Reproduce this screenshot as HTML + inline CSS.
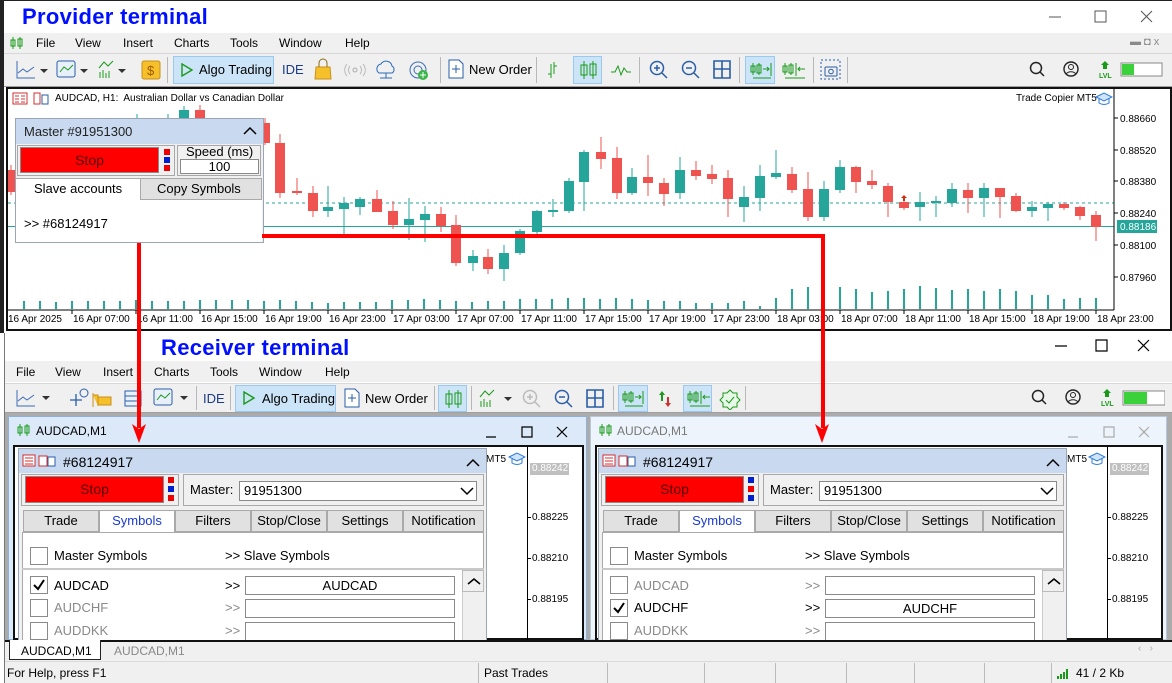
<!DOCTYPE html>
<html><head><meta charset="utf-8"><style>
*{box-sizing:border-box;margin:0;padding:0}
body{width:1172px;height:683px;position:relative;overflow:hidden;background:#fff;font-family:"Liberation Sans",sans-serif;font-size:12px;color:#000}
.a{position:absolute}
.t{position:absolute;white-space:nowrap}
.big{font-weight:bold;color:#0010ff;font-size:22px;letter-spacing:0.3px}
.menu{background:#f0f0f0}
.tb{background:#f0f0f0;border-top:1px solid #d8d8d8;border-bottom:1px solid #a0a0a0}
.hl{position:absolute;background:#cce4f7;border:1px solid #99c9ef}
.sep{position:absolute;width:1px;background:#b8b8b8}
.ax{font-size:10px;color:#000}
.panel{position:absolute;background:#f0f0f0;border:1px solid #9aa6b5}
.ph{position:absolute;background:#c9daf0}
.stop{position:absolute;background:#ff0000;border:1px solid #8a8a8a;color:#500;font-size:14px;text-align:center}
.sq{position:absolute;width:6px;height:6px}
.tab{position:absolute;top:0;height:22px;border:1px solid #a9a9a9;background:#e1e1e1;text-align:center;line-height:20px;font-size:13px}
.cb{position:absolute;width:18px;height:18px;border:1px solid #8a8a8a;background:#fff}
.inp{position:absolute;height:19px;border:1px solid #8a8a8a;background:#fff;text-align:center;font-size:13px;line-height:17px}
.f13{font-size:13px}
.gray{color:#8a8a8a}
</style></head><body>

<!-- ================= PROVIDER ================= -->
<div class="a" style="left:0;top:0;width:1172px;height:333px;border-left:4px solid #222;border-top:1px solid #222"></div>
<div class="t big" style="left:22px;top:4px">Provider terminal</div>
<svg class="a" style="left:1045px;top:8px" width="120" height="20"><path d="M4 9h12M50 3h11v11h-11zM96 3l11 11M107 3l-11 11" stroke="#555" fill="none"/></svg>
<div class="a menu" style="left:4px;top:33px;width:1168px;height:20px"></div>
<svg class="a" style="left:10px;top:36px" width="14" height="14"><path d="M3 1v12M1 4h4v6H1zM10 1v12M8 3h4v7H8z" stroke="#1a9a1a" fill="none"/></svg>
<div class="t" style="left:36px;top:36px">File</div><div class="t" style="left:75px;top:36px">View</div><div class="t" style="left:123px;top:36px">Insert</div><div class="t" style="left:174px;top:36px">Charts</div><div class="t" style="left:230px;top:36px">Tools</div><div class="t" style="left:279px;top:36px">Window</div><div class="t" style="left:345px;top:36px">Help</div>
<div class="t gray" style="left:1130px;top:36px;font-size:11px">▬ ◘ x</div>
<div class="a tb" style="left:4px;top:53px;width:1168px;height:34px"></div>
<svg class="a" style="left:14px;top:58px" width="150" height="24">
<path d="M3 3v17h18M4 15l5-4 4 3 7-5" stroke="#3a6db5" fill="none"/><path d="M26 11l4 4 4-4z" fill="#333"/>
<rect x="43" y="3" width="18" height="16" rx="2" stroke="#2a5ea8" fill="#e8f0fb"/><path d="M46 14l4-5 4 3 5-5" stroke="#1a9a1a" fill="none"/><path d="M66 11l4 4 4-4z" fill="#333"/>
<path d="M86 20v-6M89 20v-8M92 20v-5M95 20v-7M85 10l5-6 4 4 5-5" stroke="#1a9a1a" fill="none"/><path d="M104 11l4 4 4-4z" fill="#333"/>
<rect x="128" y="3" width="18" height="18" rx="2" fill="#f5c02a" stroke="#c8901a"/><text x="133" y="17" font-size="13" fill="#a05a00" font-family="Liberation Sans">$</text></svg>
<div class="sep" style="left:167px;top:57px;height:26px"></div>
<div class="hl" style="left:173px;top:56px;width:101px;height:28px"></div>
<svg class="a" style="left:180px;top:62px" width="14" height="16"><path d="M2 2l10 6-10 6z" stroke="#1a9a1a" fill="none" stroke-width="1.4"/></svg>
<div class="t f13" style="left:199px;top:62px">Algo Trading</div>
<div class="t f13" style="left:282px;top:62px;color:#1a3a8a">IDE</div>
<svg class="a" style="left:312px;top:58px" width="130" height="24"><path d="M4 9h14l1 12H3z" fill="#f5c02a" stroke="#c8901a"/><path d="M7 9V5a4 4 0 018 0v4" stroke="#8a6a10" fill="none"/>
<circle cx="43" cy="12" r="2" stroke="#aaa" fill="none"/><path d="M38 8a6 6 0 000 8M48 8a6 6 0 010 8M35 6a9 9 0 000 12M51 6a9 9 0 010 12" stroke="#bbb" fill="none"/>
<path d="M67 15a5 5 0 012-9 6 6 0 0111 2 4 4 0 010 7zM74 15v5M68 20h12" stroke="#2a6ab8" fill="none"/>
<circle cx="106" cy="12" r="8" stroke="#3a6db5" fill="none"/><circle cx="106" cy="12" r="4" stroke="#3a6db5" fill="none"/><circle cx="111" cy="17" r="5" fill="#3ab54a"/><path d="M108 17h6M111 14v6" stroke="#fff"/></svg>
<div class="sep" style="left:440px;top:57px;height:26px"></div>
<svg class="a" style="left:448px;top:59px" width="16" height="20"><path d="M1 1h10l4 4v14H1z" stroke="#2a5ea8" fill="#fff"/><path d="M8 6v8M4 10h8" stroke="#2a5ea8"/></svg>
<div class="t f13" style="left:469px;top:62px">New Order</div>
<div class="sep" style="left:536px;top:57px;height:26px"></div>
<svg class="a" style="left:545px;top:60px" width="22" height="20"><path d="M6 4v14M3 14h3M9 2v12M9 6h3" stroke="#1a9a1a" fill="none"/></svg>
<div class="hl" style="left:573px;top:56px;width:29px;height:28px"></div>
<svg class="a" style="left:579px;top:60px" width="20" height="20"><path d="M5 1v18M2 5h6v10H2zM14 1v18M11 4h6v11h-6z" stroke="#1a9a1a" fill="none"/></svg>
<svg class="a" style="left:610px;top:60px" width="22" height="20"><path d="M1 12l4 0 3-6 3 9 3-7 3 4h4" stroke="#1a9a1a" fill="none"/></svg>
<div class="sep" style="left:639px;top:57px;height:26px"></div>
<svg class="a" style="left:648px;top:58px" width="100" height="24"><circle cx="9" cy="10" r="6.5" stroke="#2a5ea8" fill="none" stroke-width="1.5"/><path d="M14 15l5 5M6 10h6M9 7v6" stroke="#2a5ea8" stroke-width="1.5"/>
<circle cx="41" cy="10" r="6.5" stroke="#2a5ea8" fill="none" stroke-width="1.5"/><path d="M46 15l5 5M38 10h6" stroke="#2a5ea8" stroke-width="1.5"/>
<path d="M66 3h16v17H66zM74 3v17M66 11h16" stroke="#2a5ea8" stroke-width="1.6" fill="none"/></svg>
<div class="sep" style="left:739px;top:57px;height:26px"></div>
<div class="hl" style="left:745px;top:56px;width:30px;height:28px"></div>
<svg class="a" style="left:750px;top:60px" width="60" height="20"><path d="M3 3v12M1 6h4v6H1zM9 3v12M7 5h4v8H7zM13 9h6M17 7l2 2-2 2M21 3v13M3 18h18" stroke="#1a9a1a" fill="none"/>
<path d="M35 3v12M33 6h4v6h-4zM41 3v12M39 5h4v8h-4zM46 3v13M48 9h7M50 7l-2 2 2 2M35 18h20" stroke="#1a9a1a" fill="none"/></svg>
<div class="sep" style="left:813px;top:57px;height:26px"></div>
<svg class="a" style="left:820px;top:59px" width="22" height="22"><rect x="1" y="1" width="19" height="19" stroke="#2a5ea8" stroke-dasharray="2 2" fill="none"/><rect x="5" y="8" width="12" height="9" rx="1" stroke="#2a5ea8" fill="none"/><circle cx="11" cy="12.5" r="2.3" stroke="#2a5ea8" fill="none"/></svg>
<div class="sep" style="left:847px;top:57px;height:26px"></div>
<svg class="a" style="left:1028px;top:60px" width="135" height="20"><circle cx="8" cy="8" r="5.5" stroke="#222" fill="none" stroke-width="1.5"/><path d="M12 12l4 4" stroke="#222" stroke-width="1.5"/>
<circle cx="43" cy="9" r="7" stroke="#222" fill="none" stroke-width="1.4"/><circle cx="43" cy="7" r="2.5" stroke="#222" fill="none"/><path d="M38 14a6 5 0 0110 0" stroke="#222" fill="none"/>
<path d="M77 1l-4 4h2v4h4V5h2z" fill="#1a9a1a"/><text x="71" y="18" font-size="7" fill="#1a9a1a" font-family="Liberation Sans" font-weight="bold">LVL</text>
<rect x="93" y="3" width="41" height="13" fill="#fff" stroke="#888"/><rect x="94" y="4" width="12" height="11" fill="#3ad13a"/></svg>

<!-- chart -->
<div class="a" style="left:6px;top:87px;width:1166px;height:244px;border:2px solid #111;background:#fff"></div>
<svg class="a" style="left:0;top:0" width="1172" height="332">
<path d="M8 203H1114" stroke="#26a69a" stroke-dasharray="3 3"/>
<path d="M8 226.5H1114" stroke="#26a69a"/>
<path d="M1114 89V310M8 310H1114" stroke="#000"/>
<g stroke="#26a69a" stroke-width="1">
<path d="M137 114v4M168 114v4M184 106v13M328 186v31M344 197v37M360 197v18M409 198v42M425 206v36M473 250v21M504 245v36M520 229v26M537 210v24M553 199v18M569 178v35M584 150v61M632 168v27M680 157v42M744 186v36M760 165v46M776 150v29M824 181v40M840 160v33M920 192v29M936 196v21M952 183v24M984 183v34M1032 201v16M1048 202v19"/>
</g>
<g fill="#26a69a">
<rect x="179" y="110" width="10" height="9"/><rect x="323" y="207" width="10" height="4"/><rect x="339" y="203" width="10" height="6"/><rect x="355" y="199" width="10" height="8"/><rect x="404" y="219" width="10" height="6"/><rect x="420" y="214" width="10" height="6"/><rect x="468" y="256" width="10" height="7"/><rect x="499" y="253" width="10" height="16"/><rect x="515" y="231" width="10" height="22"/><rect x="532" y="211" width="10" height="21"/><rect x="548" y="210" width="10" height="2"/><rect x="564" y="181" width="10" height="30"/><rect x="579" y="152" width="10" height="30"/><rect x="627" y="177" width="10" height="16"/><rect x="675" y="170" width="10" height="23"/><rect x="739" y="197" width="10" height="10"/><rect x="755" y="176" width="10" height="22"/><rect x="771" y="173" width="10" height="4"/><rect x="819" y="189" width="10" height="28"/><rect x="835" y="167" width="10" height="23"/><rect x="915" y="202" width="10" height="5"/><rect x="931" y="201" width="10" height="2"/><rect x="947" y="189" width="10" height="14"/><rect x="979" y="188" width="10" height="10"/><rect x="1027" y="207" width="10" height="4"/><rect x="1043" y="204" width="10" height="4"/>
</g>
<g stroke="#ef5350">
<path d="M11 165v30M200 105v20M265 118v27M280 134v64M297 178v17M313 186v31M377 190v22M393 201v28M441 207v25M456 215v51M488 249v25M601 137v32M617 147v52M648 155v41M664 178v28M696 161v19M712 165v19M728 170v47M792 167v26M808 172v49M856 166v27M872 170v19M888 183v34M904 196v14M968 183v30M1000 188v30M1016 193v19M1064 202v8M1080 206v14M1096 211v30"/>
</g>
<g fill="#ef5350">
<rect x="8" y="170" width="8" height="22"/><rect x="195" y="110" width="10" height="15"/><rect x="260" y="123" width="10" height="20"/><rect x="275" y="143" width="10" height="50"/><rect x="292" y="191" width="10" height="2"/><rect x="308" y="193" width="10" height="18"/><rect x="372" y="199" width="10" height="13"/><rect x="388" y="211" width="10" height="14"/><rect x="436" y="214" width="10" height="12"/><rect x="451" y="225" width="10" height="38"/><rect x="483" y="257" width="10" height="12"/><rect x="596" y="152" width="10" height="7"/><rect x="612" y="158" width="10" height="35"/><rect x="643" y="177" width="10" height="6"/><rect x="659" y="183" width="10" height="11"/><rect x="691" y="170" width="10" height="6"/><rect x="707" y="174" width="10" height="5"/><rect x="723" y="178" width="10" height="21"/><rect x="787" y="174" width="10" height="16"/><rect x="803" y="189" width="10" height="28"/><rect x="851" y="167" width="10" height="15"/><rect x="867" y="181" width="10" height="4"/><rect x="883" y="186" width="10" height="16"/><rect x="899" y="202" width="10" height="6"/><rect x="963" y="190" width="10" height="8"/><rect x="995" y="188" width="10" height="9"/><rect x="1011" y="196" width="10" height="15"/><rect x="1059" y="204" width="10" height="4"/><rect x="1075" y="207" width="10" height="9"/><rect x="1091" y="215" width="10" height="12"/>
</g>
<path d="M904 195l-3 3h2v3h2v-3h2z" fill="#d03010"/>
<g stroke="#26a69a" stroke-width="2">
<path d="M24 309v-8M40 309v-8M56 309v-7M72 309v-8M88 309v-8M104 309v-8M120 309v-8M136 309v-9M152 309v-8M168 309v-8M184 309v-8M200 309v-9M216 309v-9M232 309v-9M248 309v-9M264 309v-8M280 309v-9M296 309v-8M312 309v-7M328 309v-6M344 309v-7M360 309v-7M376 309v-7M392 309v-9M408 309v-9M424 309v-10M440 309v-9M456 309v-8M472 309v-7M488 309v-8M504 309v-8M520 309v-10M536 309v-10M552 309v-10M568 309v-11M584 309v-11M600 309v-10M616 309v-11M632 309v-10M648 309v-9M664 309v-8M680 309v-8M696 309v-6M712 309v-6M728 309v-6M744 309v-8M760 309v-3M776 309v-11M792 309v-20M808 309v-22M824 309v-21M840 309v-22M856 309v-20M872 309v-17M888 309v-18M904 309v-20M920 309v-23M936 309v-21M952 309v-19M968 309v-20M984 309v-18M1000 309v-20M1016 309v-18M1032 309v-14M1048 309v-14M1064 309v-10M1080 309v-11M1096 309v-11"/>
</g>
<g stroke="#000"><path d="M72 310v4M136 310v4M200 310v4M264 310v4M328 310v4M392 310v4M456 310v4M520 310v4M584 310v4M648 310v4M712 310v4M776 310v4M840 310v4M904 310v4M968 310v4M1032 310v4M1096 310v4M1114 118h4M1114 150h4M1114 181h4M1114 213h4M1114 245h4M1114 277h4"/></g>
<g font-family="Liberation Sans" font-size="10" fill="#000">
<text x="8" y="322">16 Apr 2025</text><text x="73" y="322">16 Apr 07:00</text><text x="137" y="322">16 Apr 11:00</text><text x="201" y="322">16 Apr 15:00</text><text x="265" y="322">16 Apr 19:00</text><text x="329" y="322">16 Apr 23:00</text><text x="393" y="322">17 Apr 03:00</text><text x="457" y="322">17 Apr 07:00</text><text x="521" y="322">17 Apr 11:00</text><text x="585" y="322">17 Apr 15:00</text><text x="649" y="322">17 Apr 19:00</text><text x="713" y="322">17 Apr 23:00</text><text x="777" y="322">18 Apr 03:00</text><text x="841" y="322">18 Apr 07:00</text><text x="905" y="322">18 Apr 11:00</text><text x="969" y="322">18 Apr 15:00</text><text x="1033" y="322">18 Apr 19:00</text><text x="1097" y="322">18 Apr 23:00</text>
<text x="1120" y="122">0.88660</text><text x="1120" y="154">0.88520</text><text x="1120" y="185">0.88380</text><text x="1120" y="217">0.88240</text><text x="1120" y="249">0.88100</text><text x="1120" y="281">0.87960</text>
</g>
<rect x="1117" y="220" width="40" height="13" fill="#26a69a"/><text x="1120" y="230" font-family="Liberation Sans" font-size="10" fill="#fff">0.88186</text>
</svg>
<svg class="a" style="left:12px;top:92px" width="40" height="14"><rect x="1" y="1" width="14" height="11" stroke="#d03030" fill="#fff"/><path d="M3 4h4M3 7h4M3 10h4M9 4h4M9 7h4M9 10h4" stroke="#d03030"/><rect x="22" y="1" width="6" height="11" stroke="#d03030" fill="#fff"/><rect x="30" y="3" width="6" height="9" stroke="#2a5ea8" fill="#fff"/></svg>
<div class="t" style="left:55px;top:93px;font-size:10px">AUDCAD, H1:&nbsp; Australian Dollar vs Canadian Dollar</div>
<div class="t" style="left:1016px;top:93px;font-size:10px">Trade Copier MT5</div>
<svg class="a" style="left:1095px;top:92px" width="18" height="14"><path d="M1 5l8-4 8 4-8 4z" stroke="#2a7ad8" fill="#cfe4fa"/><path d="M4 7v4c3 2 7 2 10 0V7" stroke="#2a7ad8" fill="none"/></svg>

<!-- provider panel -->
<div class="panel" style="left:15px;top:118px;width:249px;height:125px"></div>
<div class="ph" style="left:16px;top:119px;width:247px;height:25px"></div>
<div class="t f13" style="left:24px;top:124px;color:#222">Master #91951300</div>
<svg class="a" style="left:243px;top:126px" width="14" height="10"><path d="M1 8l6-6 6 6" stroke="#000" fill="none" stroke-width="1.5"/></svg>
<div class="a" style="left:17px;top:145px;width:158px;height:31px;border:1px solid #a8a8a8"></div>
<div class="stop" style="left:20px;top:147px;width:139px;height:26px;line-height:24px">Stop</div>
<div class="sq" style="left:164px;top:149px;background:#e00"></div><div class="sq" style="left:164px;top:157px;background:#0020d0"></div><div class="sq" style="left:164px;top:165px;background:#e00"></div>
<div class="a" style="left:177px;top:145px;width:84px;height:31px;border:1px solid #a8a8a8"></div>
<div class="t" style="left:186px;top:144px;font-size:13px">Speed (ms)</div>
<div class="inp" style="left:180px;top:159px;width:79px;height:15px;line-height:13px">100</div>
<div class="a" style="left:16px;top:178px;width:246px;height:64px;background:#fff;border-top:1px solid #a9a9a9"></div>
<div class="a" style="left:140px;top:178px;width:122px;height:22px;background:#e1e1e1;border:1px solid #a9a9a9"></div>
<div class="t f13" style="left:34px;top:181px">Slave accounts</div>
<div class="t f13" style="left:157px;top:181px">Copy Symbols</div>
<div class="t f13" style="left:24px;top:216px">&gt;&gt; #68124917</div>

<!-- ================= RECEIVER ================= -->
<div class="a" style="left:4px;top:333px;width:1168px;height:350px;background:#fff;border-left:1px solid #777"></div>
<div class="t big" style="left:161px;top:335px">Receiver terminal</div>
<svg class="a" style="left:1050px;top:338px" width="120" height="18"><path d="M5 8h12M46 2h11v11H46zM88 2l11 11M99 2l-11 11" stroke="#000" fill="none" stroke-width="1.2"/></svg>
<div class="a menu" style="left:5px;top:361px;width:1167px;height:21px"></div>
<div class="t" style="left:16px;top:365px">File</div><div class="t" style="left:55px;top:365px">View</div><div class="t" style="left:103px;top:365px">Insert</div><div class="t" style="left:154px;top:365px">Charts</div><div class="t" style="left:210px;top:365px">Tools</div><div class="t" style="left:259px;top:365px">Window</div><div class="t" style="left:325px;top:365px">Help</div>
<div class="a tb" style="left:5px;top:383px;width:1167px;height:30px"></div>
<svg class="a" style="left:14px;top:387px" width="180" height="22">
<path d="M3 3v16h18M4 14l5-4 4 3 7-5" stroke="#3a6db5" fill="none"/><path d="M28 9l4 4 4-4z" fill="#333"/>
<path d="M62 7v12M56 13h12" stroke="#2a5ea8" stroke-width="1.3"/><circle cx="70" cy="6" r="4" stroke="#2a5ea8" fill="none"/>
<path d="M79 6v14M79 8h5v11M84 10h13v8H84z" stroke="#c8901a" fill="#f5c02a"/>
<rect x="111" y="4" width="16" height="15" stroke="#2a5ea8" fill="#e8f0fb"/><path d="M111 9h16M111 14h16" stroke="#2a5ea8"/>
<rect x="140" y="2" width="18" height="16" rx="2" stroke="#2a5ea8" fill="#e8f0fb"/><path d="M143 13l4-5 4 3 5-5" stroke="#1a9a1a" fill="none"/><path d="M166 9l4 4 4-4z" fill="#333"/></svg>
<div class="sep" style="left:196px;top:386px;height:24px"></div>
<div class="t f13" style="left:203px;top:391px;color:#1a3a8a">IDE</div>
<div class="sep" style="left:230px;top:386px;height:24px"></div>
<div class="hl" style="left:235px;top:385px;width:101px;height:27px"></div>
<svg class="a" style="left:242px;top:390px" width="14" height="16"><path d="M2 2l10 6-10 6z" stroke="#1a9a1a" fill="none" stroke-width="1.4"/></svg>
<div class="t f13" style="left:262px;top:391px">Algo Trading</div>
<svg class="a" style="left:344px;top:388px" width="16" height="20"><path d="M1 1h10l4 4v14H1z" stroke="#2a5ea8" fill="#fff"/><path d="M8 6v8M4 10h8" stroke="#2a5ea8"/></svg>
<div class="t f13" style="left:365px;top:391px">New Order</div>
<div class="sep" style="left:434px;top:386px;height:24px"></div>
<div class="hl" style="left:438px;top:385px;width:29px;height:27px"></div>
<svg class="a" style="left:444px;top:389px" width="20" height="20"><path d="M5 1v18M2 5h6v10H2zM14 1v18M11 4h6v11h-6z" stroke="#1a9a1a" fill="none"/></svg>
<div class="sep" style="left:471px;top:386px;height:24px"></div>
<svg class="a" style="left:478px;top:388px" width="140" height="22"><path d="M3 19v-6M6 19v-8M9 19v-5M12 19v-7M2 9l5-6 4 4 5-5" stroke="#1a9a1a" fill="none"/><path d="M26 9l4 4 4-4z" fill="#333"/>
<circle cx="52" cy="9" r="6.5" stroke="#bbb" fill="none" stroke-width="1.5"/><path d="M57 14l5 5M49 9h6M52 6v6" stroke="#bbb" stroke-width="1.5"/>
<circle cx="84" cy="9" r="6.5" stroke="#2a5ea8" fill="none" stroke-width="1.5"/><path d="M89 14l5 5M81 9h6" stroke="#2a5ea8" stroke-width="1.5"/>
<path d="M109 2h16v17h-16zM117 2v17M109 10h16" stroke="#2a5ea8" stroke-width="1.6" fill="none"/></svg>
<div class="sep" style="left:613px;top:386px;height:24px"></div>
<div class="hl" style="left:618px;top:385px;width:30px;height:27px"></div>
<div class="hl" style="left:683px;top:385px;width:29px;height:27px"></div>
<svg class="a" style="left:622px;top:388px" width="125" height="22"><path d="M3 3v12M1 6h4v6H1zM9 3v12M7 5h4v8H7zM13 9h6M17 7l2 2-2 2M21 3v13M3 18h18" stroke="#1a9a1a" fill="none"/>
<path d="M40 3l-3 4h2v6h2V7h2z" fill="#1a9a1a"/><path d="M46 19l3-4h-2V9h-2v6h-2z" fill="#d03030"/>
<path d="M68 3v12M66 6h4v6h-4zM74 3v12M72 5h4v8h-4zM79 3v13M81 9h7M83 7l-2 2 2 2M68 18h20" stroke="#1a9a1a" fill="none"/>
<path d="M108 2l3 3h4v4l3 3-3 3v4h-4l-3 3-3-3h-4v-4l-3-3 3-3V5h4z" stroke="#1a9a1a" fill="#e8f8e8"/><path d="M104 12l3 3 5-6" stroke="#1a9a1a" fill="none"/></svg>
<div class="sep" style="left:745px;top:386px;height:24px"></div>
<svg class="a" style="left:1030px;top:388px" width="135" height="20"><circle cx="8" cy="8" r="5.5" stroke="#222" fill="none" stroke-width="1.5"/><path d="M12 12l4 4" stroke="#222" stroke-width="1.5"/>
<circle cx="43" cy="9" r="7" stroke="#222" fill="none" stroke-width="1.4"/><circle cx="43" cy="7" r="2.5" stroke="#222" fill="none"/><path d="M38 14a6 5 0 0110 0" stroke="#222" fill="none"/>
<path d="M77 1l-4 4h2v4h4V5h2z" fill="#1a9a1a"/><text x="71" y="18" font-size="7" fill="#1a9a1a" font-family="Liberation Sans" font-weight="bold">LVL</text>
<rect x="93" y="3" width="42" height="14" fill="#fff" stroke="#888"/><rect x="94" y="4" width="23" height="12" fill="#3ad13a"/></svg>

<!-- MDI area -->
<div class="a" style="left:5px;top:413px;width:1167px;height:227px;background:#ababab"></div>
<!-- left child -->
<div class="a" style="left:8px;top:416px;width:579px;height:224px;background:#dbe9f8;border:1px solid #8fb0d8"></div>
<svg class="a" style="left:17px;top:423px" width="14" height="14"><path d="M3 1v12M1 4h4v6H1zM10 1v12M8 3h4v7H8z" stroke="#1a9a1a" fill="none"/></svg>
<div class="t" style="left:36px;top:424px">AUDCAD,M1</div>
<svg class="a" style="left:480px;top:424px" width="95" height="16"><path d="M6 13h10M42 3h10v10H42zM77 3l10 10M87 3l-10 10" stroke="#000" fill="none" stroke-width="1.2"/></svg>
<div class="a" style="left:13px;top:445px;width:571px;height:195px;background:#fff;border:2px solid #111"></div>
<div class="a" style="left:527px;top:447px;width:1px;height:193px;background:#000"></div>
<div class="t" style="left:486px;top:454px;font-size:10px">MT5</div>
<svg class="a" style="left:508px;top:452px" width="18" height="14"><path d="M1 5l8-4 8 4-8 4z" stroke="#2a7ad8" fill="#cfe4fa"/><path d="M4 7v4c3 2 7 2 10 0V7" stroke="#2a7ad8" fill="none"/></svg>
<div class="a" style="left:530px;top:463px;width:39px;height:12px;background:#c0c0c0;color:#fff;font-size:10px;padding-left:2px">0.88242</div>
<div class="t ax" style="left:532px;top:512px">0.88225</div><div class="t ax" style="left:532px;top:553px">0.88210</div><div class="t ax" style="left:532px;top:594px">0.88195</div>
<div class="a" style="left:527px;top:517px;width:4px;height:1px;background:#000"></div><div class="a" style="left:527px;top:558px;width:4px;height:1px;background:#000"></div><div class="a" style="left:527px;top:599px;width:4px;height:1px;background:#000"></div>

<!-- right child -->
<div class="a" style="left:590px;top:416px;width:577px;height:224px;background:#eef4fb;border:1px solid #b8c8dc"></div>
<svg class="a" style="left:599px;top:423px" width="14" height="14"><path d="M3 1v12M1 4h4v6H1zM10 1v12M8 3h4v7H8z" stroke="#1a9a1a" fill="none"/></svg>
<div class="t" style="left:617px;top:424px;color:#777">AUDCAD,M1</div>
<svg class="a" style="left:1062px;top:424px" width="95" height="16"><path d="M6 13h10M42 3h10v10H42zM77 3l10 10M87 3l-10 10" stroke="#aaa" fill="none" stroke-width="1.2"/></svg>
<div class="a" style="left:595px;top:445px;width:568px;height:195px;background:#fff;border:2px solid #111"></div>
<div class="a" style="left:1107px;top:447px;width:1px;height:193px;background:#000"></div>
<div class="t" style="left:1067px;top:454px;font-size:10px">MT5</div>
<svg class="a" style="left:1088px;top:452px" width="18" height="14"><path d="M1 5l8-4 8 4-8 4z" stroke="#2a7ad8" fill="#cfe4fa"/><path d="M4 7v4c3 2 7 2 10 0V7" stroke="#2a7ad8" fill="none"/></svg>
<div class="a" style="left:1110px;top:463px;width:39px;height:12px;background:#c0c0c0;color:#fff;font-size:10px;padding-left:2px">0.88242</div>
<div class="t ax" style="left:1112px;top:512px">0.88225</div><div class="t ax" style="left:1112px;top:553px">0.88210</div><div class="t ax" style="left:1112px;top:594px">0.88195</div>
<div class="a" style="left:1107px;top:517px;width:4px;height:1px;background:#000"></div><div class="a" style="left:1107px;top:558px;width:4px;height:1px;background:#000"></div><div class="a" style="left:1107px;top:599px;width:4px;height:1px;background:#000"></div>

<!-- receiver panels -->
<div id="P1" class="a" style="left:18px;top:448px;width:469px;height:192px">
 <div class="panel" style="left:0;top:0;width:469px;height:200px"></div>
 <div class="ph" style="left:1px;top:1px;width:467px;height:24px"></div>
 <svg class="a" style="left:4px;top:6px" width="40" height="14"><rect x="1" y="1" width="12" height="11" stroke="#d03030" fill="#fff"/><path d="M3 4h8M3 7h8M3 10h8" stroke="#d03030"/><rect x="17" y="2" width="8" height="10" stroke="#d03030" fill="#fff"/><rect x="26" y="3" width="7" height="9" stroke="#2a5ea8" fill="#fff"/></svg>
 <div class="t" style="left:45px;top:6px;font-size:14px">#68124917</div>
 <svg class="a" style="left:448px;top:10px" width="14" height="10"><path d="M1 8l6-6 6 6" stroke="#000" fill="none" stroke-width="1.5"/></svg>
 <div class="a" style="left:3px;top:26px;width:158px;height:32px;border:1px solid #a8a8a8"></div>
 <div class="stop" style="left:7px;top:28px;width:139px;height:27px;line-height:25px">Stop</div>
 <div class="sq" style="left:150px;top:29px;background:#e00"></div><div class="sq" style="left:150px;top:38px;background:#0020d0"></div><div class="sq" style="left:150px;top:47px;background:#e00"></div>
 <div class="a" style="left:165px;top:26px;width:301px;height:32px;border:1px solid #a8a8a8"></div>
 <div class="t f13" style="left:172px;top:34px">Master:</div>
 <div class="a" style="left:221px;top:33px;width:238px;height:20px;border:1px solid #8a8a8a;background:#fff"></div>
 <div class="t f13" style="left:226px;top:35px">91951300</div>
 <svg class="a" style="left:442px;top:38px" width="14" height="10"><path d="M1 2l6 6 6-6" stroke="#000" fill="none" stroke-width="1.5"/></svg>
 <div class="a" style="left:4px;top:84px;width:462px;height:120px;background:#fff;border:1px solid #a9a9a9"></div>
 <div class="a" style="left:5px;top:62px;width:461px;height:23px">
  <div class="tab" style="left:0;width:76px">Trade</div>
  <div class="tab" style="left:76px;width:76px;background:#fff;border-bottom:none;color:#1a3ad0">Symbols</div>
  <div class="tab" style="left:152px;width:76px">Filters</div>
  <div class="tab" style="left:228px;width:76px">Stop/Close</div>
  <div class="tab" style="left:304px;width:76px">Settings</div>
  <div class="tab" style="left:380px;width:81px">Notification</div>
 </div>
 <div class="cb" style="left:12px;top:99px"></div>
 <div class="t f13" style="left:36px;top:100px">Master Symbols</div>
 <div class="t f13" style="left:207px;top:100px">&gt;&gt; Slave Symbols</div>
 <div class="a" style="left:4px;top:120px;width:462px;height:2px;background:#c8c8c8"></div>
 <div class="a" style="left:444px;top:122px;width:22px;height:80px;background:#f0f0f0;border-left:1px solid #ccc"></div>
 <div class="a" style="left:444px;top:122px;width:22px;height:22px;border:1px solid #bbb;background:#f0f0f0"></div>
 <svg class="a" style="left:449px;top:129px" width="14" height="10"><path d="M1 7l6-5 6 5" stroke="#000" fill="none" stroke-width="1.5"/></svg>
 <div class="cb" style="left:12px;top:128px"></div><div class="t f13 r1" style="left:36px;top:130px">AUDCAD</div><div class="t f13" style="left:207px;top:130px">&gt;&gt;</div><div class="inp" style="left:227px;top:128px;width:210px">AUDCAD</div>
 <div class="cb" style="left:12px;top:151px"></div><div class="t f13 gray" style="left:36px;top:152px">AUDCHF</div><div class="t f13 gray" style="left:207px;top:152px">&gt;&gt;</div><div class="inp" style="left:227px;top:151px;width:210px"></div>
 <div class="cb" style="left:12px;top:174px"></div><div class="t f13 gray" style="left:36px;top:175px">AUDDKK</div><div class="t f13 gray" style="left:207px;top:175px">&gt;&gt;</div><div class="inp" style="left:227px;top:174px;width:210px"></div>
 <svg class="a" style="left:14px;top:130px" width="14" height="14"><path d="M2 7l4 4 6-9" stroke="#000" fill="none" stroke-width="2"/></svg>
</div>

<div class="a" style="left:598px;top:448px;width:469px;height:192px;overflow:hidden">
 <div class="panel" style="left:0;top:0;width:469px;height:200px"></div>
 <div class="ph" style="left:1px;top:1px;width:467px;height:24px"></div>
 <svg class="a" style="left:4px;top:6px" width="40" height="14"><rect x="1" y="1" width="12" height="11" stroke="#d03030" fill="#fff"/><path d="M3 4h8M3 7h8M3 10h8" stroke="#d03030"/><rect x="17" y="2" width="8" height="10" stroke="#d03030" fill="#fff"/><rect x="26" y="3" width="7" height="9" stroke="#2a5ea8" fill="#fff"/></svg>
 <div class="t" style="left:45px;top:6px;font-size:14px">#68124917</div>
 <svg class="a" style="left:448px;top:10px" width="14" height="10"><path d="M1 8l6-6 6 6" stroke="#000" fill="none" stroke-width="1.5"/></svg>
 <div class="a" style="left:3px;top:26px;width:158px;height:32px;border:1px solid #a8a8a8"></div>
 <div class="stop" style="left:7px;top:28px;width:139px;height:27px;line-height:25px">Stop</div>
 <div class="sq" style="left:150px;top:29px;background:#0020d0"></div><div class="sq" style="left:150px;top:38px;background:#e00"></div><div class="sq" style="left:150px;top:47px;background:#0020d0"></div>
 <div class="a" style="left:165px;top:26px;width:301px;height:32px;border:1px solid #a8a8a8"></div>
 <div class="t f13" style="left:172px;top:34px">Master:</div>
 <div class="a" style="left:221px;top:33px;width:238px;height:20px;border:1px solid #8a8a8a;background:#fff"></div>
 <div class="t f13" style="left:226px;top:35px">91951300</div>
 <svg class="a" style="left:442px;top:38px" width="14" height="10"><path d="M1 2l6 6 6-6" stroke="#000" fill="none" stroke-width="1.5"/></svg>
 <div class="a" style="left:4px;top:84px;width:462px;height:120px;background:#fff;border:1px solid #a9a9a9"></div>
 <div class="a" style="left:5px;top:62px;width:461px;height:23px">
  <div class="tab" style="left:0;width:76px">Trade</div>
  <div class="tab" style="left:76px;width:76px;background:#fff;border-bottom:none;color:#1a3ad0">Symbols</div>
  <div class="tab" style="left:152px;width:76px">Filters</div>
  <div class="tab" style="left:228px;width:76px">Stop/Close</div>
  <div class="tab" style="left:304px;width:76px">Settings</div>
  <div class="tab" style="left:380px;width:81px">Notification</div>
 </div>
 <div class="cb" style="left:12px;top:99px"></div>
 <div class="t f13" style="left:36px;top:100px">Master Symbols</div>
 <div class="t f13" style="left:207px;top:100px">&gt;&gt; Slave Symbols</div>
 <div class="a" style="left:4px;top:120px;width:462px;height:2px;background:#c8c8c8"></div>
 <div class="a" style="left:444px;top:122px;width:22px;height:80px;background:#f0f0f0;border-left:1px solid #ccc"></div>
 <div class="a" style="left:444px;top:122px;width:22px;height:22px;border:1px solid #bbb;background:#f0f0f0"></div>
 <svg class="a" style="left:449px;top:129px" width="14" height="10"><path d="M1 7l6-5 6 5" stroke="#000" fill="none" stroke-width="1.5"/></svg>
 <div class="cb" style="left:12px;top:128px"></div><div class="t f13 gray" style="left:36px;top:130px">AUDCAD</div><div class="t f13 gray" style="left:207px;top:130px">&gt;&gt;</div><div class="inp" style="left:227px;top:128px;width:210px"></div>
 <div class="cb" style="left:12px;top:151px"></div><div class="t f13" style="left:36px;top:152px">AUDCHF</div><div class="t f13" style="left:207px;top:152px">&gt;&gt;</div><div class="inp" style="left:227px;top:151px;width:210px">AUDCHF</div>
 <div class="cb" style="left:12px;top:174px"></div><div class="t f13 gray" style="left:36px;top:175px">AUDDKK</div><div class="t f13 gray" style="left:207px;top:175px">&gt;&gt;</div><div class="inp" style="left:227px;top:174px;width:210px"></div>
 <svg class="a" style="left:14px;top:153px" width="14" height="14"><path d="M2 7l4 4 6-9" stroke="#000" fill="none" stroke-width="2"/></svg>
</div>

<!-- bottom tabs + status -->
<div class="a" style="left:5px;top:640px;width:1167px;height:21px;background:#f0f0f0;border-top:2px solid #111"></div>
<div class="a" style="left:9px;top:640px;width:92px;height:20px;background:#fff;border:1px solid #222;border-top:none"></div>
<div class="t" style="left:21px;top:644px">AUDCAD,M1</div>
<div class="t" style="left:114px;top:644px;color:#888">AUDCAD,M1</div>
<div class="t" style="left:1138px;top:643px;color:#aaa;font-size:10px">‹ &nbsp;&nbsp;›</div>
<div class="a" style="left:5px;top:661px;width:1167px;height:22px;background:#f0f0f0;border-top:1px solid #dadada"></div>
<div class="t" style="left:7px;top:666px">For Help, press F1</div>
<div class="a" style="left:478px;top:663px;width:1px;height:20px;background:#bbb"></div>
<div class="t" style="left:484px;top:666px">Past Trades</div>
<div class="a" style="left:607px;top:663px;width:1px;height:20px;background:#bbb"></div>
<div class="a" style="left:704px;top:663px;width:1px;height:20px;background:#bbb"></div>
<div class="a" style="left:775px;top:663px;width:1px;height:20px;background:#bbb"></div>
<div class="a" style="left:846px;top:663px;width:1px;height:20px;background:#bbb"></div>
<div class="a" style="left:914px;top:663px;width:1px;height:20px;background:#bbb"></div>
<div class="a" style="left:984px;top:663px;width:1px;height:20px;background:#bbb"></div>
<div class="a" style="left:1051px;top:663px;width:1px;height:20px;background:#bbb"></div>
<svg class="a" style="left:1056px;top:666px" width="16" height="14"><path d="M2 13v-3M5 13v-5M8 13v-7M11 13v-10" stroke="#1a9a1a" stroke-width="2"/></svg>
<div class="t" style="left:1076px;top:666px">41 / 2 Kb</div>

<!-- red arrows -->
<svg class="a" style="left:0;top:0" width="1172" height="683">
<path d="M262 236H823V428M139 243V428" stroke="#ff0000" stroke-width="4" fill="none"/>
<path d="M132 424l7 19 7-19-7 5z M815 424l7 19 7-19-7 5z" fill="#ff0000"/>
</svg>
</body></html>
